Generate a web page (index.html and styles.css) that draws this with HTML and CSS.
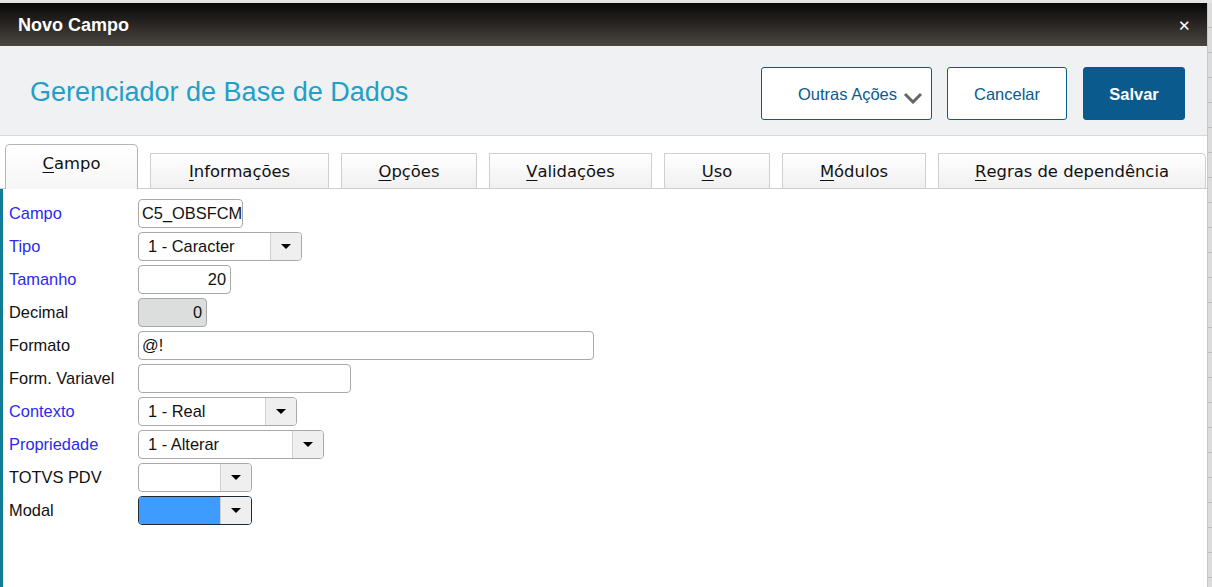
FILE: index.html
```html
<!DOCTYPE html>
<html lang="pt-BR">
<head>
    <meta charset="UTF-8">
    <title>Novo Campo</title>
    <link rel="stylesheet" href="styles.css">
</head>
<body>
    <div class="page">
        <div class="dialog">
            <!-- Title bar -->
            <div class="titlebar">
                <span class="title">Novo Campo</span>
                <span class="close">&#x2715;</span>
            </div>

            <!-- Header -->
            <div class="header">
                <h1>Gerenciador de Base de Dados</h1>
                <div class="actions">
                    <button class="btn btn-more">Outras Ações
                        <svg class="chevron" width="20" height="12" viewBox="0 0 20 12"><path d="M2 2 L10 10 L18 2" fill="none" stroke="#666" stroke-width="3"/></svg>
                    </button>
                    <button class="btn btn-cancel">Cancelar</button>
                    <button class="btn btn-save">Salvar</button>
                </div>
            </div>

            <!-- Tabs -->
            <div class="tabs">
                <div class="tab active" style="width:133px"><u>C</u>ampo</div>
                <div class="tab" style="width:179px"><u>I</u>nformações</div>
                <div class="tab" style="width:136px"><u>O</u>pções</div>
                <div class="tab" style="width:163px"><u>V</u>alidações</div>
                <div class="tab" style="width:106px"><u>U</u>so</div>
                <div class="tab" style="width:144px"><u>M</u>ódulos</div>
                <div class="tab" style="width:268px"><u>R</u>egras de dependência</div>
            </div>

            <!-- Form -->
            <div class="content">
                <div class="row">
                    <label class="req">Campo</label>
                    <div class="field" style="width:105px"><span class="val">C5_OBSFCM</span></div>
                </div>
                <div class="row">
                    <label class="req">Tipo</label>
                    <div class="field select" style="width:164px"><span class="val sel">1 - Caracter</span><span class="arrow"></span></div>
                </div>
                <div class="row">
                    <label class="req">Tamanho</label>
                    <div class="field num" style="width:93px"><span class="val">20</span></div>
                </div>
                <div class="row">
                    <label>Decimal</label>
                    <div class="field num disabled" style="width:69px"><span class="val">0</span></div>
                </div>
                <div class="row">
                    <label>Formato</label>
                    <div class="field" style="width:456px"><span class="val">@!</span></div>
                </div>
                <div class="row">
                    <label>Form. Variavel</label>
                    <div class="field" style="width:213px"></div>
                </div>
                <div class="row">
                    <label class="req">Contexto</label>
                    <div class="field select" style="width:159px"><span class="val sel">1 - Real</span><span class="arrow"></span></div>
                </div>
                <div class="row">
                    <label class="req">Propriedade</label>
                    <div class="field select" style="width:186px"><span class="val sel">1 - Alterar</span><span class="arrow"></span></div>
                </div>
                <div class="row">
                    <label>TOTVS PDV</label>
                    <div class="field select" style="width:114px"><span class="val sel"></span><span class="arrow"></span></div>
                </div>
                <div class="row">
                    <label>Modal</label>
                    <div class="field select focused" style="width:114px"><span class="val sel"></span><span class="arrow"></span></div>
                </div>
            </div>
        </div>
        <div class="scrollstrip"></div>
    </div>
</body>
</html>
```

FILE: styles.css
```css
html, body { margin: 0; padding: 0; height: 100%; }
body { font-family: "Liberation Sans", Arial, sans-serif; background: #fff; overflow: hidden; }
.page { display: flex; height: 587px; border-top: 3px solid #e4e4e4; box-sizing: border-box; }
.dialog { width: 1208px; display: flex; flex-direction: column; border-right: 1px solid #c8c8c8; box-sizing: border-box; }
.scrollstrip { flex: 1; background: repeating-linear-gradient(to bottom, #dcdcdc 0, #dcdcdc 24px, #bdbdbd 24px, #bdbdbd 25px); }

.titlebar { height: 43px; background: linear-gradient(to bottom, #080808, #4a4541); display: flex; align-items: center; justify-content: space-between; padding: 2px 18px 0; box-sizing: border-box; color: #fff; }
.title { font-weight: bold; font-size: 18px; }
.close { font-size: 15px; margin-right: -2px; }

.header { height: 89px; background: #f0f1f2; border-bottom: 1px solid #d9d9d9; display: flex; align-items: center; justify-content: space-between; padding: 0 22px 0 30px; }
.header h1 { margin: 0; font-weight: normal; font-size: 27px; color: #1ea0c8; padding-top: 3px; }
.actions { display: flex; gap: 15px; margin-top: 5px; }
.btn { height: 53px; border-radius: 3px; border: 1px solid #0c5a8c; background: #fff; color: #0c5a8c; font-family: "Liberation Sans", Arial, sans-serif; font-size: 16.5px; padding: 2px 0 0; }
.btn-more { width: 171px; padding-left: 36px; text-align: left; display: flex; align-items: center; }
.chevron { margin: 8px 0 0 6px; }
.btn-cancel { width: 120px; }
.btn-save { width: 102px; background: #0b5a8d; color: #fff; font-weight: bold; margin-left: 1px; }

.tabs { height: 52px; display: flex; align-items: flex-end; gap: 12px; padding-left: 5px; border-bottom: 1px solid #cfcfcf; font-family: "DejaVu Sans", Verdana, sans-serif; font-size: 16.4px; color: #111; }
.tab { height: 35px; box-sizing: border-box; border: 1px solid #cfcfcf; border-bottom: none; background: linear-gradient(to bottom, #fff, #f0f0f0); display: flex; align-items: center; justify-content: center; padding-top: 1px; }
.tab:last-child { border-top-right-radius: 5px; }
.tab.active { background: linear-gradient(to bottom, #fff, #f6f6f6); border-color: #b5b5b5; border-radius: 5px 5px 0 0; align-items: flex-start; padding-top: 9px; margin-bottom: -1px; height: 45px; }
.tab u { text-underline-offset: 3px; }

.content { flex: 1; border-left: 3px solid #127b95; padding: 10px 0 0 6px; display: flex; flex-direction: column; gap: 4px; }
.row { display: flex; align-items: center; height: 29px; }
.row label { width: 129px; font-size: 16.4px; color: #111; }
.row label.req { color: #2a2af0; }
.field { height: 29px; box-sizing: border-box; border: 1px solid #a9a9a9; border-radius: 4px; background: #fff; display: flex; align-items: center; font-size: 16.4px; color: #111; overflow: hidden; }
.val { padding-left: 3px; white-space: nowrap; overflow: hidden; flex: 1; }
.val.sel { padding-left: 9px; }
.num .val { text-align: right; padding-right: 4px; }
.disabled { background: #dcdede; }
.arrow { width: 30px; height: 100%; background: #efefef; border-left: 1px solid #cfcfcf; display: flex; align-items: center; justify-content: center; }
.arrow::before { content: ""; border-left: 5px solid transparent; border-right: 5px solid transparent; border-top: 5px solid #000; }
.focused { border-color: #1d2a36; }
.focused .val { background: #3e9cff; height: 100%; }
```
